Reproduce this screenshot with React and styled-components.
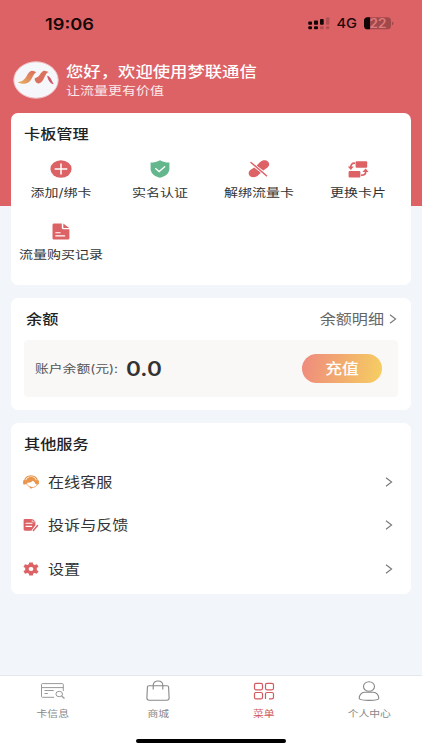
import React from 'react';
import styled, { createGlobalStyle } from 'styled-components';

const RED = '#dd6266';

const GlobalStyle = createGlobalStyle`
  * {
    box-sizing: border-box;
  }
  body {
    margin: 0;
    font-family: Inter, 'Noto Sans CJK SC', sans-serif;
    color: #333;
  }
  svg {
    display: block;
    flex-shrink: 0;
    overflow: visible;
  }
`;

const PlusIcon = () => (
  <svg width='22' height='18' viewBox='0 0 22 18'>
    <ellipse cx='11' cy='9' rx='10.6' ry='8.8' fill={RED} />
    <path d='M5.2 9h11.6M11 4v10' stroke='#fff' strokeWidth='1.5' strokeLinecap='round' />
  </svg>
);

const ShieldIcon = () => (
  <svg width='20' height='18' viewBox='0 0 20 18'>
    <path d='M10 .3C12.600 2 16 2.600 19.400 2.600V9c0 4.500-4.600 7.600-9.400 8.800C5.200 16.600.600 13.500.600 9V2.600C4 2.600 7.400 2 10 .3z' fill='#64b78c' />
    <path d='M5.600 8.600l3.500 3 5.600-4.900' fill='none' stroke='#fff' strokeWidth='1.300' strokeLinecap='round' />
  </svg>
);

const UnlinkIcon = () => (
  <svg width='22' height='18' viewBox='0 0 22 18'>
    <g fill={RED}>
      <path d='M8.500 5.800l3.600-3.900C14.500-.3 18-.2 19.900 1.400c1.900 1.700 1.700 4.300-.4 6L15.300 10.600z' />
      <path d='M6.200 7.400l6.900 5.100-3.400 3.300c-2.300 2-5.600 2-7.600.4-2-1.700-1.900-4.300.2-6.100z' />
    </g>
    <path d='M3 2.500l15.500 13.200' stroke='#fff' strokeWidth='2.800' />
    <path d='M3 2.500l15.500 13.200' stroke={RED} strokeWidth='1.500' strokeLinecap='round' />
  </svg>
);

const SwapIcon = () => (
  <svg width='20' height='17' viewBox='0 0 20 17'>
    <rect x='7.600' y='.3' width='11.600' height='6.500' rx='1' fill={RED} />
    <rect x='.6' y='9.900' width='11.800' height='6.500' rx='1' fill={RED} />
    <path d='M6.300 2.200C4 2.200 2.800 3.700 2.800 6M13.800 14.200c2.600 0 3.900-1.400 3.900-3.800' fill='none' stroke={RED} strokeWidth='1.700' strokeLinecap='round' />
    <path d='M-.2 5.400h6L2.800 9.100zM14.500 11.100h6.100L17.600 7.500z' fill={RED} />
  </svg>
);

const RecordIcon = () => (
  <svg width='18' height='17' viewBox='0 0 18 17'>
    <path d='M2.200.4h7.600v4.700c0 .8.600 1.200 1.400 1.200h6.200v8.600c0 .9-.7 1.600-1.700 1.600H2.200c-1 0-1.700-.7-1.700-1.600V2C.5 1.100 1.200.4 2.200.4z' fill={RED} />
    <path d='M11.300.6l5.900 4.500h-5.100c-.5 0-.8-.3-.8-.7z' fill={RED} />
    <path d='M3.800 9.700h4.400M3.800 12.900h8.900' stroke='#fff' strokeWidth='1.100' strokeLinecap='round' />
  </svg>
);

const ServiceIcon = () => (
  <svg width='16' height='14' viewBox='0 0 16 14'>
    <path d='M1.700 6.300C1.700 3 4.500.9 8 .9s6.300 2.100 6.300 5.400' fill='none' stroke='#e9964c' strokeWidth='1.300' />
    <path d='M2.800 8.400C2.400 4.600 4.500 2 8 2s5.600 2.600 5.200 6.400L12.300 9C12 7.200 11 6.300 9.800 5.700 8.500 7.200 6.400 7.800 4.600 7.600L4 9.200z' fill='#e9964c' />
    <rect x='.1' y='5' width='3' height='4.500' rx='1.300' fill='#e9964c' />
    <rect x='12.900' y='5' width='3' height='4.500' rx='1.300' fill='#e9964c' />
    <path d='M3.800 9.200c1 1.700 2.300 2.500 3.900 2.500M14.300 9.200c-.7 1.900-2.600 3.200-5.400 3.400' fill='none' stroke='#e9964c' strokeWidth='.8' />
    <ellipse cx='8' cy='12.600' rx='1.500' ry='.9' fill='#e9964c' />
  </svg>
);

const FeedbackIcon = () => (
  <svg width='16' height='14' viewBox='0 0 16 14'>
    <path d='M2 .9h7.600l2.800 2.700v3.800L8.400 12.700H2c-.8 0-1.400-.5-1.400-1.200V2.100C.6 1.400 1.200.9 2 .9z' fill={RED} />
    <path d='M3 5.300h6M3 8.400h5.600' stroke='#fff' strokeWidth='1.100' strokeLinecap='round' />
    <path d='M9.200 1.300v2.500h2.700' fill='none' stroke='#fff' strokeWidth='.6' />
    <path d='M14.600 7.600l-4.200 4.800' stroke='#fff' strokeWidth='3' />
    <path d='M14.600 7.600l-4.200 4.800' stroke={RED} strokeWidth='1.500' strokeLinecap='round' />
  </svg>
);

const GearIcon = () => (
  <svg width='16' height='14' viewBox='0 0 16 14'>
    <g fill={RED}>
      <ellipse cx='8' cy='7' rx='5.900' ry='4.900' />
      <path d='M6.200.4h3.600l.7 3h-5zM6.200 13.600h3.600l.7-3h-5zM.4 4.900L2 2.300l3.300 1-2 2.900zM15.600 4.900L14 2.300l-3.300 1 2 2.900zM.4 9.100L2 11.700l3.300-1-2-2.900zM15.600 9.100L14 11.700l-3.300-1 2-2.900z' />
    </g>
    <ellipse cx='8' cy='7' rx='2.400' ry='2' fill='#fff' />
  </svg>
);

const ArrowIcon = () => (
  <svg width='8' height='10' viewBox='0 0 8 10'>
    <path d='M1 .8L6.600 5 1 9.200' fill='none' stroke='#777' strokeWidth='1.100' />
  </svg>
);

const CardIcon = () => (
  <svg width='25' height='20' viewBox='0 0 25 20' fill='none' stroke='#999' strokeWidth='1'>
    <path d='M14 16.300H2.400c-.5 0-.9-.3-.9-.8V3.400c0-.5.4-.8.9-.8h20c.5 0 .9.3.9.800V10M1.500 6.600h21.800M4.500 9.500h9.200M4.500 12.500h3.300' />
    <ellipse cx='19.200' cy='13' rx='3.300' ry='2.700' />
    <path d='M21.600 15l2.900 2.400' strokeWidth='1.300' />
  </svg>
);

const BagIcon = () => (
  <svg width='24' height='22' viewBox='0 0 24 22' fill='none' stroke='#888' strokeWidth='1.100'>
    <path d='M3 5.800h18c1 0 1.600.5 1.600 1.300l.5 11c0 1.300-.8 2.100-2.200 2.100H3.100c-1.400 0-2.200-.8-2.200-2.100l.5-11c0-.8.6-1.300 1.600-1.300z' />
    <path d='M7.200 9.600V5.300C7.200 2.700 9.200 1 12 1s4.800 1.700 4.800 4.300v4.300' />
  </svg>
);

const MenuIcon = () => (
  <svg width='22' height='18' viewBox='0 0 22 18' fill='none' stroke='#d45a60' strokeWidth='1.200'>
    <rect x='1.500' y='1.400' width='8' height='6.400' rx='1.500' />
    <rect x='12.500' y='1.400' width='8' height='6.400' rx='1.500' />
    <rect x='1.500' y='10.500' width='8' height='6.400' rx='1.500' />
    <path d='M12.500 17V12c0-.9.600-1.500 1.500-1.500h5c.9 0 1.500.6 1.500 1.500v3.200c0 1-.7 1.700-1.700 1.700H16' />
  </svg>
);

const UserIcon = () => (
  <svg width='22' height='20' viewBox='0 0 22 20' fill='none' stroke='#888' strokeWidth='1.100'>
    <ellipse cx='11' cy='5.500' rx='5.500' ry='4.700' />
    <path d='M6.500 11.200h9c3 0 5.300 3.200 5.300 6 0 1.400-4.800 2.200-9.800 2.200s-9.800-.8-9.800-2.200c0-2.800 2.300-6 5.300-6z' />
  </svg>
);

const Logo = () => (
  <svg width='46' height='38' viewBox='0 0 46 38'>
    <defs>
      <linearGradient id='wing' x1='0' y1='1' x2='1' y2='0'>
        <stop offset='0' stopColor='#e9b25f' />
        <stop offset='1' stopColor='#d9695c' />
      </linearGradient>
    </defs>
    <ellipse cx='23' cy='19' rx='22.200' ry='18.200' fill='#f6f7fb' stroke='#f0bfc3' strokeWidth='1' />
    <path d='M4.700 21.300c4.200-.4 6.800-2.300 9-6.200 1.200-2.300 2.600-5 5-5.300 1.800-.2 2.900.9 4.700 1.200-2.100 1.200-2.700 2.800-4 5.300-2.200 4.300-4.300 6.300-8 6.500-2.800.1-4.900-.5-6.700-1.500z' fill='url(#wing)' />
    <path d='M21.600 17.600l3.400-1.800c1.900-1 2.900-4.700 5.200-5.700 1.900-.8 3.300.5 5.400.9-2.200.9-2.900 2.600-4 5-1.700 3.800-3.200 6.200-5.900 6.400-2.600.1-4-2.200-4.100-4.800z' fill='#dc705e' />
    <path d='M34.200 14.700c1.200.4 2.300 1 3.200 2.200l3.300 6.300c-3-.3-5.700-3.500-6.500-8.500z' fill='#cf5968' />
  </svg>
);

const StatusIcons = () => (
  <svg width='86' height='14' viewBox='0 0 86 14'>
    <g fill='#110506'>
      <rect x='.3' y='4.500' width='3.700' height='3.200' rx='.8' />
      <rect x='6' y='3.500' width='4' height='4.200' rx='.8' />
      <rect x='12' y='2' width='3.700' height='5.700' rx='.8' />
      <rect x='.3' y='9.200' width='3.700' height='3.100' rx='1' />
      <rect x='6' y='9.200' width='4' height='3.100' rx='1' />
    </g>
    <g fill='#b14f53'>
      <rect x='18' y='.5' width='3.400' height='7.200' rx='.8' />
      <rect x='12' y='9.200' width='3.700' height='3.100' rx='1' />
      <rect x='18' y='9.200' width='3.400' height='3.100' rx='1' />
    </g>
    <rect x='56' y='.3' width='27' height='12' rx='3.600' fill='#a1484b' />
    <path d='M62 .3v12h-2.500c-2 0-3.500-1.400-3.500-3.400V3.700c0-2 1.500-3.400 3.500-3.400z' fill='#110506' />
    <path d='M84 4.700c1 .2 1.500.8 1.500 1.700s-.5 1.500-1.500 1.700z' fill='#a1484b' />
    <text x='28.500' y='11.300' fontSize='13.500' fontWeight='500' fill='#24090b' textLength='20.500' lengthAdjust='spacingAndGlyphs'>4G</text>
    <text x='61.500' y='10.800' fontSize='12.500' fontWeight='600' fill='#de7b7e' textLength='17' lengthAdjust='spacingAndGlyphs'>22</text>
  </svg>
);

const actions = [
  { name: '添加/绑卡', Icon: PlusIcon },
  { name: '实名认证', Icon: ShieldIcon },
  { name: '解绑流量卡', Icon: UnlinkIcon },
  { name: '更换卡片', Icon: SwapIcon },
  { name: '流量购买记录', Icon: RecordIcon },
];

const services = [
  { name: '在线客服', Icon: ServiceIcon },
  { name: '投诉与反馈', Icon: FeedbackIcon },
  { name: '设置', Icon: GearIcon },
];

const tabs = [
  { name: '卡信息', Icon: CardIcon },
  { name: '商城', Icon: BagIcon },
  { name: '菜单', Icon: MenuIcon, active: true },
  { name: '个人中心', Icon: UserIcon },
];

const App = () => {
  return (
    <Screen>
      <GlobalStyle />
      <StatusBar>
        <Text $size={18.3} $weight={600} $flat={0.87} $color='#16090a'>19:06</Text>
        <StatusIcons />
      </StatusBar>
      <Greeting>
        <Logo />
        <div>
          <Text as='h1' $size={17.35} $line={21} $weight={500} $color='#fff'>您好，欢迎使用梦联通信</Text>
          <Text as='p' $size={14} $line={17} $color='#fbe9e9'>让流量更有价值</Text>
        </div>
      </Greeting>
      <Content>
        <Card $height={172}>
          <CardHead>
            <Text as='h2' $size={16.2} $weight={500} $color='#222'>卡板管理</Text>
          </CardHead>
          <Actions>
            {actions.map(({ name, Icon }) => (
              <Action key={name}>
                <IconBox><Icon /></IconBox>
                <Text $size={14}>{name}</Text>
              </Action>
            ))}
          </Actions>
        </Card>
        <Card $height={112}>
          <CardHead $left={15}>
            <Text as='h2' $size={16.2} $weight={500} $color='#222'>余额</Text>
            <Detail>
              <Text $size={16.1} $color='#666'>余额明细</Text>
              <ArrowIcon />
            </Detail>
          </CardHead>
          <Balance>
            <Text $size={13.8} $color='#555'>账户余额(元):</Text>
            <Amount $size={22.6} $weight={600} $flat={0.9}>0.0</Amount>
            <Recharge type='button'>
              <Text $size={16.8} $weight={500} $color='#fff'>充值</Text>
            </Recharge>
          </Balance>
        </Card>
        <Card $height={171}>
          <CardHead>
            <Text as='h2' $size={16.2} $weight={500} $color='#222'>其他服务</Text>
          </CardHead>
          <Services>
            {services.map(({ name, Icon }) => (
              <ServiceRow key={name}>
                <Icon />
                <Text $size={16.1}>{name}</Text>
                <ArrowIcon />
              </ServiceRow>
            ))}
          </Services>
        </Card>
      </Content>
      <TabBar>
        {tabs.map(({ name, Icon, active }) => (
          <Tab key={name}>
            <TabIcon><Icon /></TabIcon>
            <Text $size={10.8} $line={14} $color={active ? '#d0575d' : '#888'}>{name}</Text>
          </Tab>
        ))}
        <HomeIndicator />
      </TabBar>
    </Screen>
  );
};

const Screen = styled.main`
  width: 422px;
  height: 750px;
  display: flex;
  flex-direction: column;
  overflow: hidden;
  background: linear-gradient(${RED} 206px, #f2f6fa 206px);
`;

// wide lettering: glyphs keep their advance but are flattened
const Text = styled.span`
  display: block;
  margin: 0;
  font-size: ${(p) => p.$size}px;
  line-height: ${(p) => p.$line || 20}px;
  font-weight: ${(p) => p.$weight || 400};
  color: ${(p) => p.$color || '#333'};
  white-space: nowrap;
  transform: scaleY(${(p) => p.$flat || 0.85});
`;

const StatusBar = styled.header`
  height: 47px;
  display: flex;
  align-items: center;
  justify-content: space-between;
  padding: 0 28px 0 45px;
`;

const Greeting = styled.section`
  height: 66px;
  display: flex;
  align-items: flex-start;
  gap: 7px;
  padding: 14px 0 0 13px;
`;

const Content = styled.div`
  flex: 1;
  display: flex;
  flex-direction: column;
  gap: 13px;
  padding: 0 11px;
`;

const Card = styled.section`
  height: ${(p) => p.$height}px;
  border-radius: 7px;
  background: #fff;
`;

const CardHead = styled.div`
  height: 42px;
  display: flex;
  align-items: center;
  justify-content: space-between;
  padding: 0 14px 0 ${(p) => p.$left || 13}px;
`;

const Actions = styled.div`
  display: grid;
  grid-template-columns: repeat(4, 99px);
  grid-auto-rows: 62px;
  padding-left: 0.5px;
`;

const Action = styled.div`
  display: flex;
  flex-direction: column;
  align-items: center;
  padding-top: 4px;
`;

const IconBox = styled.div`
  height: 20px;
  margin-bottom: 4px;
  display: flex;
  align-items: center;
`;

const Detail = styled.div`
  display: flex;
  align-items: center;
  gap: 5px;
`;

const Balance = styled.div`
  height: 57px;
  margin: 0 13px;
  padding: 0 16px 0 11px;
  display: flex;
  align-items: center;
  border-radius: 4px;
  background: #faf8f7;
`;

const Amount = styled(Text)`
  flex: 1;
  padding-left: 8px;
`;

const Recharge = styled.button`
  width: 80px;
  height: 29px;
  display: flex;
  align-items: center;
  justify-content: center;
  padding: 0;
  border: 0;
  border-radius: 15px;
  font-family: inherit;
  background: linear-gradient(100deg, #ef8a7e, #f2ac6e 50%, #f6cf62);
`;

const Services = styled.div`
  margin-top: -5px;
`;

const ServiceRow = styled.div`
  height: 43.5px;
  display: flex;
  align-items: center;
  gap: 9px;
  padding: 0 18px 0 12px;

  svg:last-child {
    margin-left: auto;
  }
`;

const TabBar = styled.nav`
  position: relative;
  height: 75px;
  display: grid;
  grid-template-columns: repeat(4, 105.5px);
  border-top: 1px solid #e4e8ec;
  background: #fff;
`;

const Tab = styled.div`
  display: flex;
  flex-direction: column;
  align-items: center;
`;

const TabIcon = styled.div`
  height: 30px;
  margin-bottom: 1px;
  display: flex;
  align-items: center;
`;

const HomeIndicator = styled.div`
  position: absolute;
  left: 136px;
  bottom: 7px;
  width: 150px;
  height: 4.5px;
  border-radius: 3px;
  background: #000;
`;

export default App;
